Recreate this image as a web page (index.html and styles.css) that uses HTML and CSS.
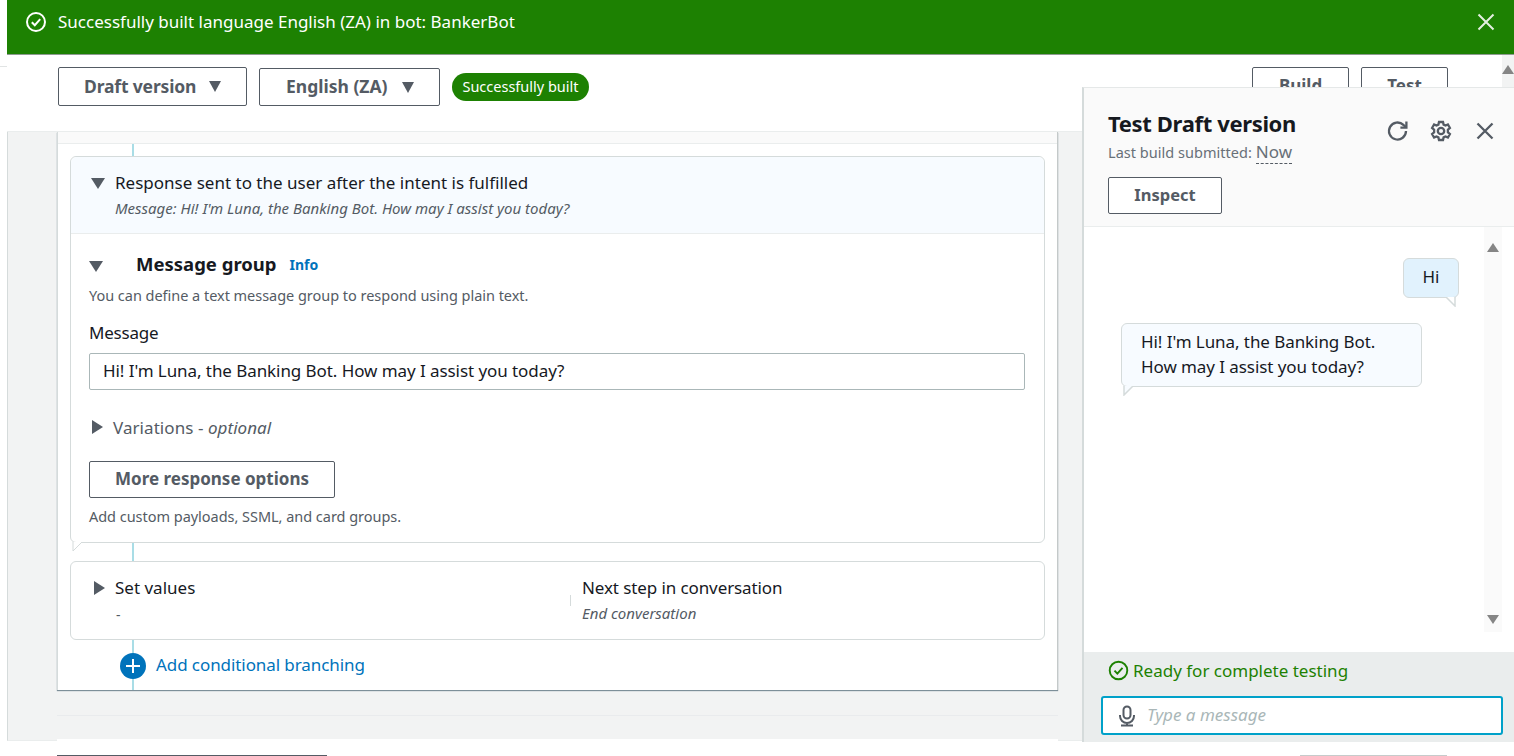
FILE: index.html
```html
<!DOCTYPE html>
<html lang="en">
<head>
<meta charset="utf-8">
<title>BankerBot</title>
<link rel="stylesheet" href="styles.css">
</head>
<body>
<div class="page">
  <header class="banner">
    <svg class="banner-check" viewBox="0 0 22 22"><circle cx="11" cy="11" r="9" /><path d="M6.8 11.2l3 3 5.4-6" /></svg>
    <span class="banner-text">Successfully built language English (ZA) in bot: BankerBot</span>
    <svg class="banner-close" viewBox="0 0 18 18"><path d="M1.5 1.5l15 15M16.5 1.5l-15 15" /></svg>
  </header>
  <div class="toolbar">
    <button class="select select-draft">Draft version <i class="tri tri-down"></i></button>
    <button class="select select-lang">English (ZA) <i class="tri tri-down"></i></button>
    <span class="badge">Successfully built</span>
    <div class="toolbar-actions">
      <button class="btn btn-build">Build</button>
      <button class="btn btn-test">Test</button>
    </div>
  </div>
  <main class="content">
    <section class="card">
      <div class="card-top"></div>
      <div class="connector c-12"></div>
      <div class="box">
        <div class="box-head">
          <i class="tri tri-down tri-head"></i>
          <div>
            <div class="box-title">Response sent to the user after the intent is fulfilled</div>
            <div class="box-sub">Message: Hi! I'm Luna, the Banking Bot. How may I assist you today?</div>
          </div>
        </div>
        <div class="box-body">
          <div class="group-row">
            <i class="tri tri-down"></i>
            <h2 class="group-title">Message group</h2>
            <a class="info">Info</a>
          </div>
          <p class="hint hint-group">You can define a text message group to respond using plain text.</p>
          <label class="field-label">Message</label>
          <div class="input">Hi! I'm Luna, the Banking Bot. How may I assist you today?</div>
          <div class="variations"><i class="tri tri-right"></i><span>Variations - <em>optional</em></span></div>
          <button class="btn btn-more">More response options</button>
          <p class="hint hint-more">Add custom payloads, SSML, and card groups.</p>
        </div>
        <svg class="tail" viewBox="0 0 11 10"><path d="M1 0v9l9-9" /></svg>
      </div>
      <div class="connector c-18"></div>
      <div class="box box-values">
        <div class="values-col values-left">
          <i class="tri tri-right"></i>
          <div>
            <div class="box-title">Set values</div>
            <div class="dash">-</div>
          </div>
        </div>
        <div class="values-col values-right">
          <div class="box-title next-title">Next step in conversation</div>
          <div class="box-sub">End conversation</div>
        </div>
      </div>
      <div class="branch">
        <div class="connector-full"></div>
        <svg class="plus" viewBox="0 0 26 26"><circle cx="13" cy="13" r="13" /><path d="M13 6v14M6 13h14" /></svg>
        <a class="branch-link">Add conditional branching</a>
      </div>
    </section>
    <div class="rule rule-a"></div>
    <div class="rule rule-b"></div>
  </main>
  <footer class="footer">
    <div class="foot-bar foot-a"></div>
    <div class="foot-bar foot-b"></div>
  </footer>

  <aside class="test-panel">
    <div class="test-head">
      <div class="test-title-row">
        <h1 class="test-title">Test Draft version</h1>
        <div class="test-icons">
          <svg class="ticon ticon-refresh" viewBox="0 0 24 24"><path d="M20 12a8.5 8.5 0 1 1-2.6-6.1L20 8.2" /><path d="M20.4 2.6v6h-6" /></svg>
          <svg class="ticon" viewBox="0 0 24 24"><circle cx="12" cy="12" r="3.2" /><path d="M10 3h4l.6 2.6 1.9.9 2.4-1 2 3.4-2 1.8v2.6l2 1.8-2 3.4-2.4-1-1.9.9L14 21h-4l-.6-2.6-1.9-.9-2.4 1-2-3.4 2-1.8v-2.6l-2-1.8 2-3.4 2.4 1 1.9-.9z" /></svg>
          <svg class="ticon" viewBox="0 0 24 24"><path d="M4.5 4.5l15 15M19.5 4.5l-15 15" /></svg>
        </div>
      </div>
      <div class="test-sub">Last build submitted: <span class="now">Now</span></div>
      <button class="btn btn-inspect">Inspect</button>
    </div>
    <div class="chat">
      <div class="chat-scroll">
        <div class="bubble bubble-user">Hi<svg class="btail btail-r" viewBox="0 0 11 10"><path d="M10 0v9l-9-9" /></svg></div>
        <div class="bubble bubble-bot">Hi! I'm Luna, the Banking Bot.<br>How may I assist you today?<svg class="btail btail-l" viewBox="0 0 11 10"><path d="M1 0v9l9-9" /></svg></div>
      </div>
      <div class="scroll-track"><i class="stri stri-up"></i><i class="stri stri-down"></i></div>
    </div>
    <div class="test-foot">
      <div class="ready">
        <svg class="ready-icon" viewBox="0 0 22 22"><circle cx="11" cy="11" r="9.2" /><path d="M6.8 11.2l3 3 5.4-6" /></svg>
        Ready for complete testing
      </div>
      <div class="msg-input">
        <svg class="mic" viewBox="0 0 18 22"><rect x="5.5" y="1.5" width="7" height="12" rx="3.5" /><path d="M2 10v1a7 7 0 0 0 14 0v-1M9 18v2M3 20.5h12" /></svg>
        <span class="placeholder">Type a message</span>
      </div>
    </div>
  </aside>
  <div class="page-scroll"><i class="stri stri-up"></i></div>
  <div class="left-line"></div>
</div>
</body>
</html>
```
FILE: styles.css
```css
* { box-sizing: border-box; }
html, body { margin: 0; height: 100%; overflow: hidden; }
body {
  background: #fff;
  color: #16191f;
  font-family: "Noto Sans", "Open Sans", sans-serif;
  font-size: 17px;
}
.page {
  position: relative;
  width: 1514px;
  height: 756px;
  padding-left: 7px;
  display: flex;
  flex-direction: column;
  overflow: hidden;
}
button { font-family: inherit; background: #fff; cursor: pointer; }
h1, h2, p { margin: 0; }
.tri { display: inline-block; width: 0; height: 0; flex: none; }
.tri-down { border-left: 7px solid transparent; border-right: 7px solid transparent; border-top: 11px solid #545b64; }
.tri-right { border-top: 7px solid transparent; border-bottom: 7px solid transparent; border-left: 11px solid #545b64; }

.banner {
  flex: none;
  height: 55px;
  background: #1d8102;
  border-bottom: 1px solid #8d9b90;
  color: #fff;
  display: flex;
  align-items: center;
  padding: 0 19px 11px 18px;
}
.banner-check { width: 22px; height: 22px; fill: none; stroke: #fff; stroke-width: 2; margin-right: 11px; }
.banner-text { font-size: 17px; }
.banner-close { width: 18px; height: 18px; margin-left: auto; fill: none; stroke: #fff; stroke-width: 2; opacity: .88; }

.toolbar {
  flex: none;
  height: 77px;
  padding: 12px 0 0 51px;
  display: flex;
  align-items: flex-start;
  background: #fff;
  border-bottom: 1px solid #eaeded;
}
.select {
  height: 39px;
  border: 1px solid #545b64;
  border-radius: 2px;
  color: #545b64;
  font-weight: 700;
  font-size: 17.5px;
  display: flex;
  align-items: center;
  padding: 0 0 2px;
}
.select .tri { border-left-width: 6.5px; border-right-width: 6.5px; }
.select-draft { width: 189px; padding-left: 25px; letter-spacing: -0.15px; }
.select-draft .tri { margin: 2px 0 0 13px; }
.select-lang { width: 181px; height: 38px; margin: 1px 0 0 12px; padding-left: 26px; }
.select-lang .tri { margin: 2px 0 0 14px; }
.badge {
  margin: 6px 0 0 12px;
  height: 28px;
  width: 137px;
  border-radius: 14px;
  background: #1d8102;
  color: #fff;
  font-size: 14.5px;
  display: flex;
  align-items: center;
  justify-content: center;
  padding-bottom: 2px;
}
.toolbar-actions { margin-left: auto; margin-right: 66px; display: flex; gap: 12px; }
.btn {
  border: 1px solid #545b64;
  border-radius: 2px;
  color: #545b64;
  font-weight: 700;
  font-size: 17px;
  padding: 0 0 2px;
}
.btn-build { width: 97px; height: 39px; }
.btn-test { width: 87px; height: 39px; }

.content {
  flex: none;
  height: 609px;
  background: #f2f3f3;
  padding-left: 49px;
  border-left: 1px solid #d5dbdb;
  border-bottom: 1px solid #eaeded;
}
.card {
  width: 1001px;
  height: 558px;
  background: #fff;
  border-left: 1px solid #d5dbdb;
  border-right: 1px solid #c4c9c9;
  box-shadow: 0 1px 1px #7d8f99;
  display: flex;
  flex-direction: column;
  padding: 0 12px;
}
.card-top { flex: none; height: 12px; background: #fafafa; border-bottom: 1px solid #eaeded; margin: 0 -12px; }
.connector { flex: none; width: 2px; background: #a9dde6; margin-left: 62px; }
.c-12 { height: 12px; }
.c-18 { height: 18px; }
.box {
  position: relative;
  flex: none;
  width: 975px;
  border: 1px solid #d5dbdb;
  border-radius: 6px;
  background: #fff;
}
.box-head {
  height: 77px;
  background: #f7fbff;
  border-bottom: 1px solid #eaeded;
  border-radius: 6px 6px 0 0;
  display: flex;
  padding: 16px 0 0 20px;
}
.tri-head { margin: 5px 10px 0 0; }
.box-title { font-size: 17px; line-height: 20px; }
.next-title { letter-spacing: -0.1px; }
.box-sub { font-size: 15px; font-style: italic; color: #545b64; line-height: 18px; margin-top: 6px; }
.box-body { height: 308px; padding: 17px 0 0 18px; }
.group-row { display: flex; align-items: center; height: 24px; }
.group-row .tri { margin: 7px 0 0 0; }
.group-title { font-size: 18.5px; font-weight: 700; margin-left: 33px; }
.info { font-size: 14px; font-weight: 700; color: #0073bb; margin: 2px 0 0 13px; }
.hint { font-size: 14.5px; color: #545b64; line-height: 18px; letter-spacing: -0.03px; }
.hint-group { margin-top: 11px; }
.field-label { display: block; font-size: 17px; letter-spacing: -0.2px; line-height: 20px; margin-top: 19px; }
.input {
  width: 936px;
  height: 37px;
  margin-top: 10px;
  border: 1px solid #aab7b8;
  border-radius: 2px;
  font-size: 17px;
  letter-spacing: -0.07px;
  line-height: 33px;
  padding-left: 13px;
}
.variations { display: flex; align-items: center; height: 24px; margin-top: 25px; padding-left: 3px; color: #545b64; font-size: 17px; letter-spacing: 0.06px; }
.variations .tri { margin-right: 10px; }
.btn-more { display: block; width: 246px; height: 37px; margin-top: 22px; }
.hint-more { margin-top: 9px; }
.tail { position: absolute; left: 1px; bottom: -10px; width: 11px; height: 10px; fill: #fff; stroke: #d5dbdb; }
.box-values { height: 79px; display: flex; }
.values-col { padding-top: 16px; }
.values-left { width: 500px; display: flex; padding-left: 23px; position: relative; }
.values-left .tri { margin: 3px 10px 0 0; }
.values-left::after { content: ""; position: absolute; right: 0; top: 33px; width: 1px; height: 11px; background: #d5dbdb; }
.values-right { padding-left: 11px; }
.dash { color: #545b64; font-size: 14px; line-height: 18px; margin-top: 8px; padding-left: 1px; }
.branch {
  position: relative;
  flex: 1;
  display: flex;
  align-items: flex-start;
  padding: 13px 0 0 50px;
}
.connector-full { position: absolute; left: 62px; top: 0; bottom: 0; width: 2px; background: #a9dde6; }
.plus { position: relative; width: 26px; height: 26px; }
.plus circle { fill: #0073bb; }
.plus path { stroke: #fff; stroke-width: 2; fill: none; }
.branch-link { color: #0073bb; font-size: 17px; letter-spacing: -0.08px; margin: 1px 0 0 10px; line-height: 22px; }
.rule { width: 1001px; height: 1px; background: #e9ebed; }
.rule-a { margin-top: 25px; }
.rule-b { margin-top: 23px; height: 2px; background: #fff; }

.footer { flex: 1; background: #fff; position: relative; display: flex; align-items: flex-end; }
.foot-bar { height: 1px; }
.foot-a { width: 270px; margin-left: 50px; background: #545b64; }
.foot-b { width: 147px; margin-left: 973px; background: #c6cbcb; }

.test-panel {
  position: absolute;
  left: 1082px;
  top: 87px;
  width: 432px;
  height: 655px;
  background: #fff;
  border-left: 2px solid #d5dbdb;
  border-top: 1px solid #e5e8e8;
  display: flex;
  flex-direction: column;
}
.test-head {
  flex: none;
  height: 139px;
  background: #fafafa;
  border-bottom: 1px solid #eaeded;
  padding: 20px 0 0 24px;
}
.test-title-row { display: flex; justify-content: space-between; }
.test-title { font-size: 22px; font-weight: 700; line-height: 30px; letter-spacing: -0.35px; }
.test-icons { display: flex; gap: 20px; margin: 11px 17px 0 0; }
.ticon { width: 24px; height: 24px; fill: none; stroke: #545b64; stroke-width: 2.3; }
.ticon-refresh { margin-right: -1px; }
.test-sub { font-size: 14.5px; color: #687078; line-height: 24px; margin-top: -3px; letter-spacing: 0.03px; }
.now { display: inline-block; font-size: 17px; border-bottom: 1px dashed #545b64; line-height: 22px; }
.btn-inspect { display: block; width: 114px; height: 37px; margin-top: 13px; font-size: 16.5px; }
.chat { flex: 1; display: flex; position: relative; }
.chat-scroll { flex: 1; position: relative; }
.bubble {
  position: absolute;
  background: #f7fbff;
  border: 1px solid #d5dbdb;
  border-radius: 6px;
  font-size: 17px;
  letter-spacing: -0.07px;
}
.bubble-user { left: 319px; top: 31px; width: 56px; height: 40px; background: #e1f2fd; line-height: 36px; text-align: center; }
.bubble-bot { left: 37px; top: 96px; width: 301px; height: 64px; line-height: 25px; padding: 5px 0 0 19px; }
.btail { position: absolute; bottom: -10px; width: 11px; height: 10px; stroke: #d5dbdb; stroke-width: 1.5; fill: #fff; }
.btail-r { right: 2px; }
.btail-l { left: 1px; fill: #f7fbff; }
.scroll-track {
  width: 18px;
  margin-right: 12px;
  height: 405px;
  background: #fafafa;
  display: flex;
  flex-direction: column;
  justify-content: space-between;
  align-items: center;
  padding: 16px 0 8px;
  align-self: flex-start;
}
.stri { display: block; width: 0; height: 0; border-left: 6.5px solid transparent; border-right: 6.5px solid transparent; }
.stri-up { border-bottom: 9px solid #858585; }
.stri-down { border-top: 9px solid #858585; }
.test-foot { flex: none; height: 90px; background: #eaeded; padding: 7px 11px 0 17px; }
.ready { display: flex; align-items: center; color: #1d8102; font-size: 17px; height: 22px; padding-left: 7px; gap: 4px; }
.ready-icon { width: 21px; height: 21px; fill: none; stroke: #1d8102; stroke-width: 2; }
.msg-input {
  height: 39px;
  margin-top: 15px;
  background: #fff;
  border: 2px solid #00a1c9;
  border-radius: 3px;
  display: flex;
  align-items: center;
  padding-left: 15px;
}
.mic { width: 18px; height: 22px; fill: none; stroke: #545b64; stroke-width: 2; }
.placeholder { color: #aab7b8; font-style: italic; font-size: 17px; margin-left: 11px; padding-bottom: 2px; }
.page-scroll {
  position: absolute;
  right: 0;
  top: 55px;
  width: 12px;
  height: 32px;
  background: #f2f3f3;
  padding: 10px 0 0 0;
  display: flex;
  justify-content: center;
}
.left-line { position: absolute; left: 0; top: 66px; width: 7px; height: 1px; background: #e1e4e4; }
```
